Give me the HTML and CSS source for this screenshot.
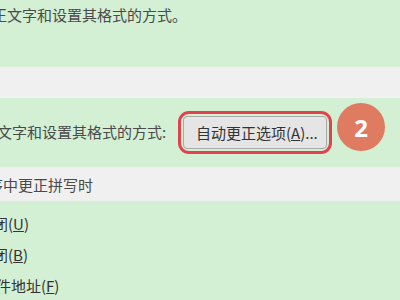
FILE: index.html
```html
<!DOCTYPE html>
<html lang="zh-CN">

<head>
    <meta charset="UTF-8" />
    <title>自动更正</title>
    <link rel="stylesheet" href="styles.css">
</head>

<body>
    <div class="section intro">
        <p class="line intro-text">更正文字和设置其格式的方式。</p>
    </div>

    <div class="band"></div>

    <div class="section options-row">
        <span class="row-label">更正文字和设置其格式的方式:</span>
        <div class="highlight">
            <button class="btn">自动更正选项(<u>A</u>)...</button>
        </div>
        <div class="step">2</div>
    </div>

    <div class="band heading">
        <span class="heading-text">程序中更正拼写时</span>
    </div>

    <div class="section list">
        <div class="item item-a">关闭(<u>U</u>)</div>
        <div class="item item-b">关闭(<u>B</u>)</div>
        <div class="item item-c">文件地址(<u>F</u>)</div>
    </div>
</body>

</html>
```

FILE: styles.css
```css
html,
body {
    margin: 0;
    padding: 0;
    overflow: hidden;
}

body {
    width: 400px;
    height: 300px;
    background: #d3efd4;
    font-family: "Noto Sans CJK SC", "Noto Sans", sans-serif;
    font-size: 15px;
    color: #4a4a4a;
}

.section {
    background: #d3efd4;
}

.line {
    margin: 0;
    line-height: 20px;
    white-space: nowrap;
}

/* Top description */
.intro {
    height: 67px;
    padding-top: 5px;
    box-sizing: border-box;
}

.intro-text {
    margin-left: -23px;
}

/* Gray separators */
.band {
    height: 31px;
    background: #f0f0f0;
}

.band.heading {
    height: 34px;
    display: flex;
    align-items: center;
}

.heading-text {
    margin-left: -27px;
    white-space: nowrap;
    line-height: 20px;
    padding-top: 1px;
}

/* Row with the button */
.options-row {
    height: 69px;
    display: flex;
    align-items: center;
    padding-bottom: 2px;
    box-sizing: border-box;
}

.row-label {
    flex: none;
    width: 207px;
    margin-left: -33px;
    margin-right: 4px;
    white-space: nowrap;
}

.highlight {
    flex: none;
    width: 154px;
    height: 43px;
    box-sizing: border-box;
    border: 3px solid #e2424d;
    border-radius: 11px;
    padding: 2px;
    margin-top: 1px;
}

.btn {
    width: 100%;
    height: 100%;
    border: 1px solid #a9a9a9;
    border-radius: 4px;
    background: #e5e5e5;
    font-family: inherit;
    font-size: 15px;
    color: #333;
    padding: 0 0 0 12px;
    text-align: left;
    white-space: nowrap;
}

.step {
    flex: none;
    width: 48px;
    height: 48px;
    margin-left: 5px;
    margin-bottom: 9px;
    border-radius: 50%;
    background: #df7b61;
    color: #fff;
    font-family: "Noto Sans", sans-serif;
    font-weight: bold;
    font-size: 24px;
    display: flex;
    align-items: center;
    justify-content: center;
}

/* Checkbox list (cut at the left edge) */
.list {
    padding-top: 13px;
}

.item {
    line-height: 20px;
    height: 31px;
    color: #333;
    white-space: nowrap;
}

.item-a,
.item-b {
    margin-left: -22px;
}

.item-c {
    margin-left: -19px;
}
```
